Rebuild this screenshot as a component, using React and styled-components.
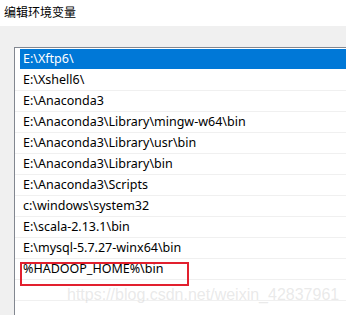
import React from "react";
import styled, { createGlobalStyle } from "styled-components";

const Global = createGlobalStyle`
  html, body { margin: 0; padding: 0; background: #f0f0f0; }
  body { width: 346px; height: 315px; overflow: hidden; }
`;

const Window = styled.div`
  width: 346px;
  height: 315px;
  display: flex;
  flex-direction: column;
  background: #f0f0f0;
  overflow: hidden;
`;

const TitleBar = styled.div`
  height: 26px;
  flex: none;
  background: #ffffff;
  padding-left: 4px;
  font-family: "Noto Sans CJK SC", "Microsoft YaHei", sans-serif;
  font-size: 12px;
  line-height: 24px;
  color: #000;
`;

const Body = styled.div`
  flex: 1;
  min-height: 0;
  padding: 21px 0 0 14px;
  display: flex;
`;

const ListBox = styled.div`
  position: relative;
  flex: 1;
  background: #ffffff;
  border-top: 1px solid #828790;
  border-left: 1px solid #828790;
  padding-top: 1px;
  overflow: hidden;
  font-family: "Noto Sans", "Liberation Sans", sans-serif;
  font-size: 12.5px;
`;

const Row = styled.div`
  height: 20px;
  padding-left: 5px;
  border-bottom: 1px solid ${(p) => (p.$selected ? "#ffffff" : "#f0f0f0")};
  display: flex;
`;

const Cell = styled.div`
  flex: 1;
  height: 20px;
  line-height: 20px;
  padding-left: 3px;
  white-space: nowrap;
  color: ${(p) => (p.$selected ? "#ffffff" : "#000000")};
  background: ${(p) => (p.$selected ? "#0078d7" : "transparent")};
`;

const Highlight = styled.div`
  position: absolute;
  left: 5px;
  top: 214px;
  width: 169px;
  height: 24px;
  box-sizing: border-box;
  border: 2px solid #e2202e;
  pointer-events: none;
`;

const Watermark = styled.div`
  position: absolute;
  left: 52px;
  top: 238px;
  font-family: "Liberation Sans", Arial, sans-serif;
  font-size: 16px;
  line-height: 18px;
  color: rgba(200, 200, 200, 0.4);
  white-space: nowrap;
  pointer-events: none;
`;

const paths = [
  "E:\\Xftp6\\",
  "E:\\Xshell6\\",
  "E:\\Anaconda3",
  "E:\\Anaconda3\\Library\\mingw-w64\\bin",
  "E:\\Anaconda3\\Library\\usr\\bin",
  "E:\\Anaconda3\\Library\\bin",
  "E:\\Anaconda3\\Scripts",
  "c:\\windows\\system32",
  "E:\\scala-2.13.1\\bin",
  "E:\\mysql-5.7.27-winx64\\bin",
  "%HADOOP_HOME%\\bin",
  "",
  "",
];

export default function App() {
  return (
    <>
      <Global />
      <Window>
        <TitleBar>编辑环境变量</TitleBar>
        <Body>
          <ListBox>
            {paths.map((p, i) => (
              <Row key={i} $selected={i === 0}>
                <Cell $selected={i === 0}>{p}</Cell>
              </Row>
            ))}
            <Highlight />
            <Watermark>https://blog.csdn.net/weixin_42837961</Watermark>
          </ListBox>
        </Body>
      </Window>
    </>
  );
}
